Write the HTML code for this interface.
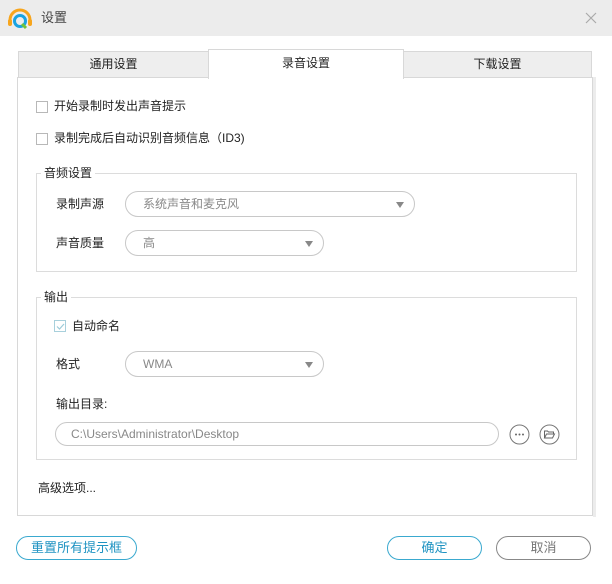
<!DOCTYPE html>
<html><head><meta charset="utf-8"><style>
*{margin:0;padding:0;box-sizing:border-box}
body{width:612px;height:584px;background:#fff;position:relative;overflow:hidden;font-family:"Liberation Sans","Noto Sans CJK SC",sans-serif;font-size:12px;color:#222}
.a{position:absolute}
.t{position:absolute;line-height:14px;white-space:nowrap}
.cb{position:absolute;width:12px;height:12px;border:1px solid #b8b8b8;background:#fff}
.grp{position:absolute;border:1px solid #dcdcdc}
.gl{position:absolute;background:#fff;padding:0 3px;line-height:14px;top:-8px;left:4px}
.combo{position:absolute;border:1px solid #c8c8c8;border-radius:13px;background:#fff;color:#888}
.combo span{position:absolute;left:17px;top:5px;line-height:14px}
.combo i{position:absolute;right:10px;top:10px;width:0;height:0;border-left:4px solid transparent;border-right:4px solid transparent;border-top:6px solid #888}
.btn{position:absolute;height:24px;border-radius:12px;text-align:center;line-height:22px;font-size:13px}
</style></head><body>
<div class="a" style="left:0;top:0;width:612px;height:36px;background:#ececec"></div>
<svg class="a" style="left:7px;top:6px" width="26" height="26" viewBox="0 0 26 26">
<path d="M3 14 A10 10 0 0 1 23 14" fill="none" stroke="#f7a51c" stroke-width="3"/>
<rect x="1" y="13" width="4" height="7" rx="2" fill="#f7a51c"/><rect x="21" y="13" width="4" height="7" rx="2" fill="#f7a51c"/>
<circle cx="13" cy="15" r="5.5" fill="none" stroke="#1aa3e0" stroke-width="3"/>
<path d="M15 18 L19 22" stroke="#6fc23a" stroke-width="3"/>
</svg>
<div class="t" style="left:41px;top:11px;font-size:13px;color:#444">设置</div>
<svg class="a" style="left:585px;top:12px" width="12" height="12"><path d="M1 1L11 11M11 1L1 11" stroke="#aaa" stroke-width="1.2"/></svg>

<div class="a" style="left:593px;top:77px;width:3px;height:440px;background:#ececec"></div>
<div class="a" style="left:17px;top:77px;width:576px;height:439px;border:1px solid #d8d8d8;border-top:none"></div>
<div class="a" style="left:17px;top:77px;width:576px;height:1px;background:#d8d8d8"></div>
<div class="a" style="left:18px;top:51px;width:191px;height:27px;background:#eee;border:1px solid #d8d8d8;text-align:center;line-height:25px;font-size:12px">通用设置</div>
<div class="a" style="left:403px;top:51px;width:189px;height:27px;background:#eee;border:1px solid #d8d8d8;text-align:center;line-height:25px">下载设置</div>
<div class="a" style="left:208px;top:49px;width:196px;height:30px;background:#fff;border:1px solid #d8d8d8;border-bottom:none;text-align:center;line-height:26px">录音设置</div>

<div class="cb" style="left:36px;top:101px"></div><div class="t" style="left:54px;top:99px">开始录制时发出声音提示</div>
<div class="cb" style="left:36px;top:133px"></div><div class="t" style="left:54px;top:131px">录制完成后自动识别音频信息（ID3)</div>

<div class="grp" style="left:36px;top:173px;width:541px;height:99px"><div class="gl">音频设置</div></div>
<div class="t" style="left:56px;top:197px">录制声源</div>
<div class="combo" style="left:125px;top:191px;width:290px;height:26px"><span>系统声音和麦克风</span><i></i></div>
<div class="t" style="left:56px;top:236px">声音质量</div>
<div class="combo" style="left:125px;top:230px;width:199px;height:26px"><span>高</span><i></i></div>

<div class="grp" style="left:36px;top:297px;width:541px;height:163px"><div class="gl">输出</div></div>
<div class="cb" style="left:54px;top:320px;border-color:#a8d0dc"></div>
<svg class="a" style="left:56px;top:322px" width="9" height="9"><path d="M1 4.5L3.5 7L8 2" fill="none" stroke="#9ccbd9" stroke-width="1.2"/></svg>
<div class="t" style="left:72px;top:319px">自动命名</div>
<div class="t" style="left:56px;top:357px">格式</div>
<div class="combo" style="left:125px;top:351px;width:199px;height:26px"><span>WMA</span><i></i></div>
<div class="t" style="left:56px;top:397px">输出目录:</div>
<div class="combo" style="left:55px;top:422px;width:444px;height:24px"><span style="left:15px;top:4px">C:\Users\Administrator\Desktop</span></div>
<svg class="a" style="left:509px;top:424px" width="21" height="21"><circle cx="10.5" cy="10.5" r="9.5" fill="none" stroke="#777"/><circle cx="7" cy="10.5" r="1" fill="#666"/><circle cx="10.5" cy="10.5" r="1" fill="#666"/><circle cx="14" cy="10.5" r="1" fill="#666"/></svg>
<svg class="a" style="left:539px;top:424px" width="21" height="21"><circle cx="10.5" cy="10.5" r="9.5" fill="none" stroke="#777"/><path d="M5.5 14V7h3l1 1h5v2M5.5 14l2-4h8l-2 4z" fill="none" stroke="#666"/></svg>

<div class="t" style="left:38px;top:481px">高级选项...</div>

<div class="btn" style="left:16px;top:536px;width:121px;border:1px solid #3aa9cf;color:#1f93c2">重置所有提示框</div>
<div class="btn" style="left:387px;top:536px;width:95px;border:1px solid #3aa9cf;color:#1f93c2">确定</div>
<div class="btn" style="left:496px;top:536px;width:95px;border:1px solid #888;color:#777">取消</div>
</body></html>
